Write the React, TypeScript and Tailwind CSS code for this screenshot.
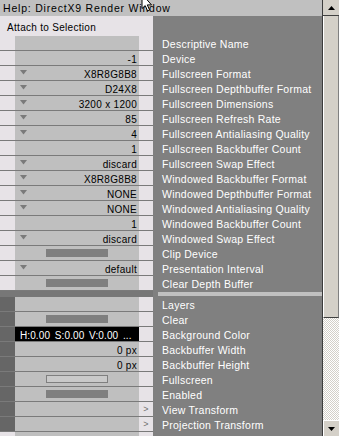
import clsx from 'clsx'

type Kind = 'empty' | 'text' | 'drop' | 'bar' | 'hollow' | 'color' | 'arrow'

interface PropRow {
  label: string
  kind: Kind
  value?: string
}

const deviceRows: PropRow[] = [
  { label: 'Descriptive Name', kind: 'empty' },
  { label: 'Device', kind: 'text', value: '-1' },
  { label: 'Fullscreen Format', kind: 'drop', value: 'X8R8G8B8' },
  { label: 'Fullscreen Depthbuffer Format', kind: 'drop', value: 'D24X8' },
  { label: 'Fullscreen Dimensions', kind: 'drop', value: '3200 x 1200' },
  { label: 'Fullscreen Refresh Rate', kind: 'drop', value: '85' },
  { label: 'Fullscreen Antialiasing Quality', kind: 'drop', value: '4' },
  { label: 'Fullscreen Backbuffer Count', kind: 'text', value: '1' },
  { label: 'Fullscreen Swap Effect', kind: 'drop', value: 'discard' },
  { label: 'Windowed Backbuffer Format', kind: 'drop', value: 'X8R8G8B8' },
  { label: 'Windowed Depthbuffer Format', kind: 'drop', value: 'NONE' },
  { label: 'Windowed Antialiasing Quality', kind: 'drop', value: 'NONE' },
  { label: 'Windowed Backbuffer Count', kind: 'text', value: '1' },
  { label: 'Windowed Swap Effect', kind: 'drop', value: 'discard' },
  { label: 'Clip Device', kind: 'bar' },
  { label: 'Presentation Interval', kind: 'drop', value: 'default' },
  { label: 'Clear Depth Buffer', kind: 'bar' },
]

const layerRows: PropRow[] = [
  { label: 'Layers', kind: 'empty' },
  { label: 'Clear', kind: 'bar' },
  { label: 'Background Color', kind: 'color', value: 'H:0.00  S:0.00  V:0.00  ...' },
  { label: 'Backbuffer Width', kind: 'text', value: '0 px' },
  { label: 'Backbuffer Height', kind: 'text', value: '0 px' },
  { label: 'Fullscreen', kind: 'hollow' },
  { label: 'Enabled', kind: 'bar' },
  { label: 'View Transform', kind: 'arrow' },
  { label: 'Projection Transform', kind: 'arrow' },
]

const font = "font-['Liberation_Sans',Arial,sans-serif] text-[10px] tracking-[0.3px]"

function DropTriangle() {
  return (
    <svg width="7" height="5" viewBox="0 0 7 5" className="mt-[1px] shrink-0">
      <path d="M0 0h7L3.5 4.5z" fill="#7a7a7a" />
    </svg>
  )
}

function Value({ row }: { row: PropRow }) {
  switch (row.kind) {
    case 'text':
      return <div className="flex h-full items-start justify-end pr-[2px] pt-[3px] leading-[11px]">{row.value}</div>
    case 'drop':
      return (
        <div className="flex h-full items-start justify-between pl-[5px] pr-[2px] pt-[3px] leading-[11px]">
          <DropTriangle />
          <span>{row.value}</span>
        </div>
      )
    case 'bar':
      return (
        <div className="flex h-full items-center justify-center">
          <div className="h-[8px] w-[62px] bg-[#7f7f7f]" />
        </div>
      )
    case 'hollow':
      return (
        <div className="flex h-full items-center justify-center">
          <div className="h-[8px] w-[62px] border border-[#7f7f7f] bg-[#c9c9c9]" />
        </div>
      )
    case 'color':
      return (
        <div className="h-full overflow-hidden whitespace-pre bg-black pl-[5px] pt-[3px] text-[10px] leading-[11px] tracking-[0.1px] text-white [word-spacing:-0.5px]">
          {row.value}
        </div>
      )
    default:
      return null
  }
}

function Row({ row, dark }: { row: PropRow; dark?: boolean }) {
  return (
    <div className="flex h-[15px]">
      <div className="flex w-[153px] border-b border-[#7a7a7a] bg-[#e7e3e7]">
        <div className={clsx('w-[15px]', dark && 'bg-[#666666]')} />
        <div className="w-[124px] bg-[#bfbfbf] text-black">
          <Value row={row} />
        </div>
        <div className="flex w-[14px] items-start justify-center pt-[2px] text-[9px] leading-[11px] text-[#707070]">
          {row.kind === 'arrow' ? '>' : null}
        </div>
      </div>
      <div className="flex-1 whitespace-nowrap bg-[#808080] pl-[9px] pt-[3px] text-[10.5px] leading-[11px] tracking-[0.25px] text-white">
        {row.label}
      </div>
    </div>
  )
}

function ScrollBar() {
  return (
    <div className="flex w-[17px] flex-col border-l border-[#3c3c3c]">
      <div className="flex h-[16px] items-center justify-center border-b border-[#404040] bg-[#d4d0c8]">
        <svg width="7" height="4" viewBox="0 0 7 4">
          <path d="M0 4h7L3.5 0z" fill="#000" />
        </svg>
      </div>
      <div className="h-[302px] border-b border-l border-r border-b-[#404040] border-l-white border-r-[#808080] bg-[#d4d0c8]" />
      <div className="flex-1 bg-[repeating-conic-gradient(#d4d0c8_0_25%,#ffffff_0_50%)] bg-[length:2px_2px]" />
      <div className="flex h-[16px] items-center justify-center border-l border-t border-l-white border-t-white bg-[#d4d0c8]">
        <svg width="7" height="4" viewBox="0 0 7 4">
          <path d="M0 0h7L3.5 4z" fill="#000" />
        </svg>
      </div>
    </div>
  )
}

// mouse pointer caught in the screenshot, tip sits above the frame
function Cursor() {
  return (
    <svg width="14" height="14" viewBox="0 0 14 14" className="absolute left-[141px] top-0">
      <path d="M1 -6V8.5L4.2 5.6L6.6 11L8.6 10.1L6.3 4.9H10.5Z" fill="#fff" stroke="#000" strokeWidth="1" />
    </svg>
  )
}

export default function App() {
  return (
    <div className={clsx('relative flex h-[436px] w-[339px] overflow-hidden', font)}>
      <div className="flex w-[322px] flex-col">
        <div className="h-[16px] bg-[#c0c0c0] pl-[3px] pt-[3px] text-[10.5px] leading-[11px] tracking-[0.8px] text-black">
          Help: DirectX9 Render Window
        </div>

        <div className="flex h-[20px]">
          <div className="w-[153px] bg-[#e7e3e7] pl-[7px] pt-[6px] leading-[11px] text-black">Attach to Selection</div>
          <div className="flex-1 bg-[#808080]" />
        </div>

        {deviceRows.map(r => (
          <Row key={r.label} row={r} />
        ))}

        <div className="flex h-[6px]">
          <div className="w-[153px] bg-[#777777]" />
          <div className="flex-1 bg-[#808080] pl-[5px] pt-[1px]">
            <div className="h-[4px] bg-[#c0c0c0]" />
          </div>
        </div>

        {layerRows.map(r => (
          <Row key={r.label} row={r} dark />
        ))}

        <div className="flex flex-1">
          <div className="flex w-[153px] bg-[#e7e3e7]">
            <div className="w-[15px]" />
            <div className="w-[124px] bg-[#bfbfbf]" />
          </div>
          <div className="flex-1 bg-[#808080]" />
        </div>
      </div>
      <ScrollBar />
      <Cursor />
    </div>
  )
}
